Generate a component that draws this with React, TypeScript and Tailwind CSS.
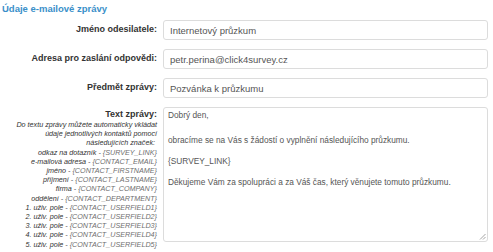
export default function App() {
  const fields = [
    { label: "Jméno odesilatele:", value: "Internetový průzkum" },
    { label: "Adresa pro zaslání odpovědi:", value: "petr.perina@click4survey.cz" },
    { label: "Předmět zprávy:", value: "Pozvánka k průzkumu" },
  ];

  const tags = [
    ["odkaz na dotazník", "{SURVEY_LINK}"],
    ["e-mailová adresa", "{CONTACT_EMAIL}"],
    ["jméno", "{CONTACT_FIRSTNAME}"],
    ["příjmení", "{CONTACT_LASTNAME}"],
    ["firma", "{CONTACT_COMPANY}"],
    ["oddělení", "{CONTACT_DEPARTMENT}"],
    ["1. uživ. pole", "{CONTACT_USERFIELD1}"],
    ["2. uživ. pole", "{CONTACT_USERFIELD2}"],
    ["3. uživ. pole", "{CONTACT_USERFIELD3}"],
    ["4. uživ. pole", "{CONTACT_USERFIELD4}"],
    ["5. uživ. pole", "{CONTACT_USERFIELD5}"],
  ];

  const intro = [
    "Do textu zprávy můžete automaticky vkládat",
    "údaje jednotlivých kontaktů pomocí",
    "následujících značek:\u00a0",
  ];

  return (
    <div className="w-[493px] h-[252px] bg-white overflow-hidden font-['Liberation_Sans',Arial,sans-serif]">
      <h3 className="pl-[2px] pt-[3px] text-[9.5px] leading-[12px] font-bold text-[#3a8fc9]">
        Údaje e-mailové zprávy
      </h3>

      <div className="mt-[5px] grid grid-cols-[157px_325px] items-start gap-x-[6px] gap-y-[9px]">
        {fields.map((f) => (
          <div key={f.label} className="contents">
            <label className="flex h-[20px] items-center justify-end text-[9px] font-bold text-[#333]">
              {f.label}
            </label>
            <input
              readOnly
              defaultValue={f.value}
              className="h-[20px] rounded-[3px] border border-[#dcdcdc] px-[6px] text-[9.5px] text-[#555] outline-none"
            />
          </div>
        ))}

        <div className="text-right text-[#333]">
          <label className="block pt-[1px] text-[9px] leading-[12px] font-bold">Text zprávy:</label>
          <div className="text-[7.2px] leading-[9.2px] italic">
            {intro.map((line) => (
              <div key={line} className="whitespace-nowrap">
                {line}
              </div>
            ))}
            {tags.map(([name, tag]) => (
              <div key={tag} className="whitespace-nowrap">
                {name} - <span className="text-[#6f6f6f]">{tag}</span>
              </div>
            ))}
          </div>
        </div>

        <div className="relative h-[135px] rounded-[3px] border border-[#dcdcdc] px-[4px] pt-[1.5px] text-[8.3px] leading-[11px] text-[#555]">
          <p>Dobrý den,</p>
          <p className="mt-[14px]">obracíme se na Vás s žádostí o vyplnění následujícího průzkumu.</p>
          <p className="mt-[10px]">{"{SURVEY_LINK}"}</p>
          <p className="mt-[10px]">Děkujeme Vám za spolupráci a za Váš čas, který věnujete tomuto průzkumu.</p>
          <svg className="absolute bottom-[1px] right-[1px]" width="7" height="7" viewBox="0 0 7 7">
            <path d="M6.5 1 L1 6.5 M6.5 4 L4 6.5" stroke="#9a9a9a" strokeWidth="0.9" />
          </svg>
        </div>
      </div>
    </div>
  );
}
